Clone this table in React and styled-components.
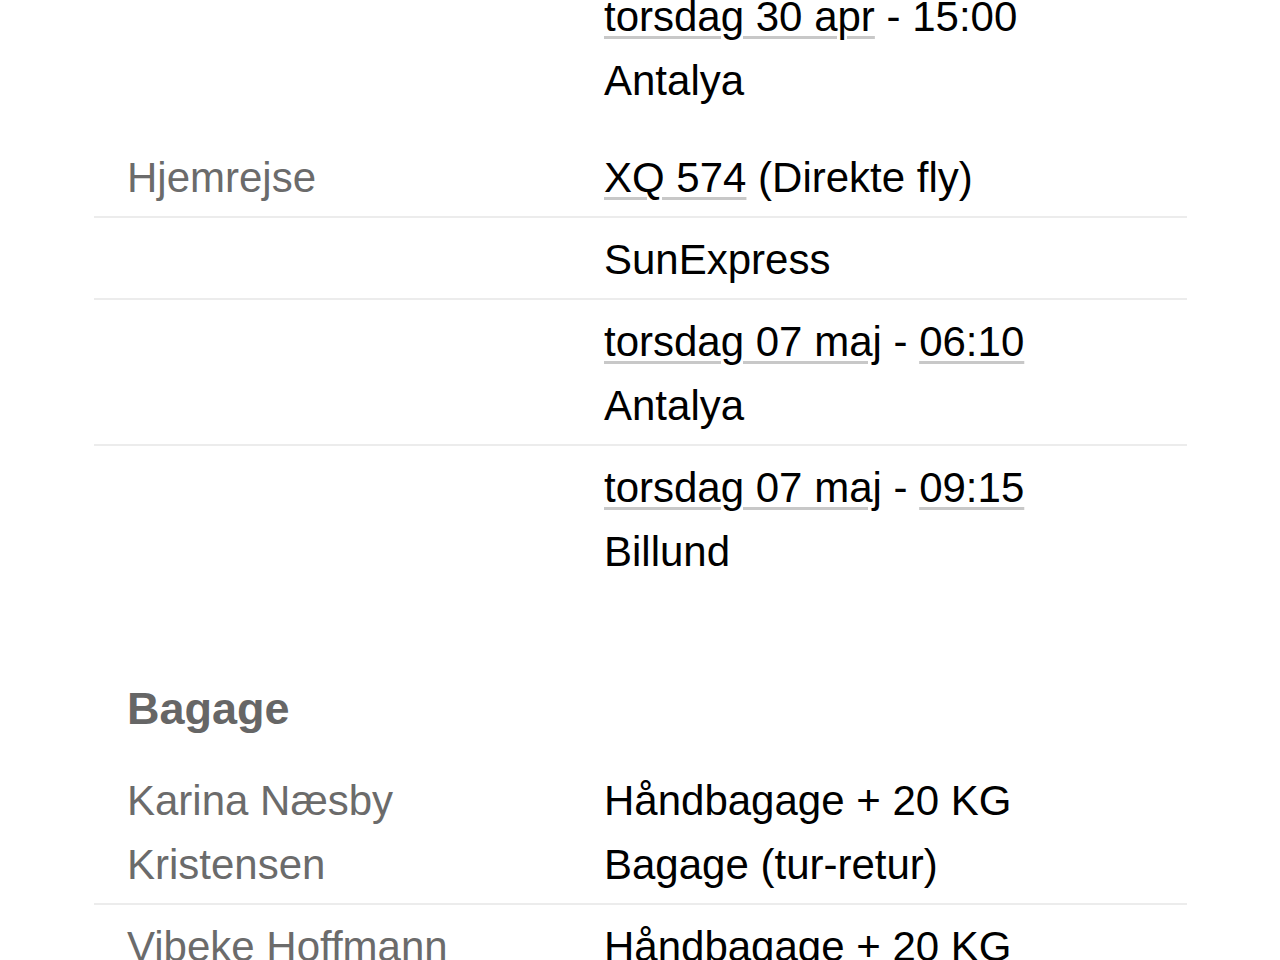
import React from "react";
import styled, { createGlobalStyle } from "styled-components";

const Global = createGlobalStyle`
  html, body {
    margin: 0;
    padding: 0;
    background: #fff;
  }
  body {
    font-family: "Liberation Sans", Arial, sans-serif;
    -webkit-font-smoothing: antialiased;
  }
`;

const Page = styled.div`
  width: 1280px;
  height: 960px;
  overflow: hidden;
  background: #fff;
`;

const Content = styled.div`
  margin-top: -25px;
  padding: 0 93px 0 94px;
  display: flex;
  flex-direction: column;
`;

const Group = styled.div`
  display: flex;
  flex-direction: column;
  margin-top: ${p => p.$gap || 0}px;
`;

const Row = styled.div`
  display: grid;
  grid-template-columns: 510px 1fr;
  padding: 10px 0 6px;
  border-bottom: ${p => (p.$last ? "none" : "2px solid #ececec")};
  font-size: 42px;
  line-height: 64px;
`;

const Label = styled.div`
  padding: 0 30px 0 33px;
  color: #6b6b6b;
`;

const Value = styled.div`
  color: #000;
  display: flex;
  flex-direction: column;
`;

const Line = styled.span`
  display: block;
  white-space: nowrap;
`;

const Link = styled.span`
  text-decoration: underline;
  text-decoration-color: #c8c8c8;
  text-decoration-thickness: 3px;
  text-underline-offset: 5px;
  text-decoration-skip-ink: auto;
`;

const Heading = styled.h2`
  margin: 87px 0 18px;
  padding-left: 33px;
  font-size: 45px;
  line-height: 64px;
  font-weight: bold;
  color: #666;
`;

const flights = [
  {
    gap: 0,
    rows: [
      {
        lines: [
          <><Link>torsdag 30 apr</Link> - 15:00</>,
          "Antalya",
        ],
      },
    ],
  },
  {
    gap: 17,
    rows: [
      { label: "Hjemrejse", lines: [<><Link>XQ 574</Link> (Direkte fly)</>] },
      { lines: ["SunExpress"] },
      {
        lines: [
          <><Link>torsdag 07 maj</Link> - <Link>06:10</Link></>,
          "Antalya",
        ],
      },
      {
        lines: [
          <><Link>torsdag 07 maj</Link> - <Link>09:15</Link></>,
          "Billund",
        ],
      },
    ],
  },
];

const baggage = [
  { label: "Karina Næsby Kristensen", lines: ["Håndbagage + 20 KG", "Bagage (tur-retur)"] },
  { label: "Vibeke Hoffmann", lines: ["Håndbagage + 20 KG", "Bagage (tur-retur)"] },
];

function InfoRow({ label, lines, last }) {
  return (
    <Row $last={last}>
      <Label>{label}</Label>
      <Value>
        {lines.map((l, i) => <Line key={i}>{l}</Line>)}
      </Value>
    </Row>
  );
}

export default function App() {
  return (
    <Page>
      <Global />
      <Content>
        {flights.map((g, gi) => (
          <Group key={gi} $gap={g.gap}>
            {g.rows.map((r, i) => (
              <InfoRow key={i} label={r.label} lines={r.lines} last={i === g.rows.length - 1} />
            ))}
          </Group>
        ))}
        <Heading>Bagage</Heading>
        <Group>
          {baggage.map((r, i) => (
            <InfoRow key={i} label={r.label} lines={r.lines} last={i === baggage.length - 1} />
          ))}
        </Group>
      </Content>
    </Page>
  );
}
